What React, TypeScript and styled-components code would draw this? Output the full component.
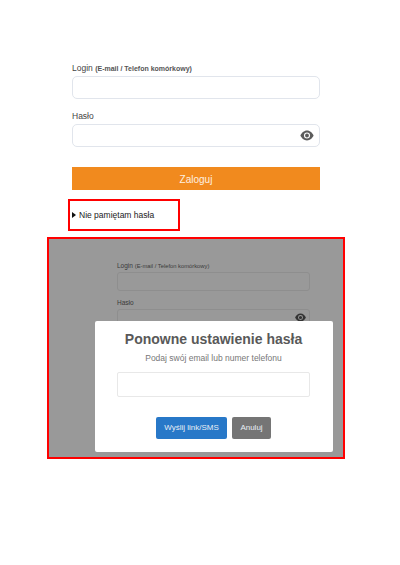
import styled, { createGlobalStyle } from "styled-components";

const GlobalStyle = createGlobalStyle`
  html, body {
    margin: 0;
    padding: 0;
    background: #fff;
    font-family: "Liberation Sans", Arial, sans-serif;
  }
`;

const Page = styled.div`
  width: 400px;
  height: 565px;
  overflow: hidden;
  padding-top: 62px;
  box-sizing: border-box;
`;

const LoginForm = styled.form`
  width: 248px;
  margin-left: 72px;
`;

const Label = styled.label`
  display: block;
  font-size: 8.5px;
  line-height: 12px;
  height: 14px;
  color: #444;
`;

const Hint = styled.span`
  font-size: 7px;
  font-weight: bold;
  color: #555;
`;

const InputWrap = styled.div`
  position: relative;
  margin-bottom: 11px;
`;

const Input = styled.div`
  height: 23px;
  box-sizing: border-box;
  border: 1px solid #e1e5ec;
  border-radius: 5px;
  background: #fff;
`;

const EyeIcon = styled.svg`
  position: absolute;
  right: 6px;
  top: 6px;
  width: 14px;
  height: 11px;
  fill: #5c5c5c;
`;

const SubmitButton = styled.div`
  height: 23px;
  margin-top: 20px;
  background: #f18a1e;
  color: #fdf0e0;
  font-size: 10px;
  line-height: 25px;
  text-align: center;
`;

const ForgotBox = styled.div`
  width: 112px;
  height: 32px;
  margin: 9px 0 6px 68px;
  box-sizing: border-box;
  border: 2px solid #f00;
  display: flex;
  align-items: center;
  padding-left: 2px;
  font-size: 8.5px;
  color: #222;
`;

const Arrow = styled.span`
  width: 0;
  height: 0;
  margin-right: 3px;
  border-left: 4px solid #111;
  border-top: 3px solid transparent;
  border-bottom: 3px solid transparent;
`;

const PreviewFrame = styled.div`
  position: relative;
  width: 298px;
  height: 222px;
  margin-left: 47px;
  box-sizing: border-box;
  border: 2px solid #f00;
  background: #999;
  overflow: hidden;
  padding: 22px 0 0 68px;
`;

const DimLabel = styled.div`
  font-size: 6.5px;
  line-height: 9px;
  height: 10px;
  color: #3a3a3a;
`;

const DimHint = styled.span`
  font-size: 5.8px;
  color: #3a3a3a;
`;

const DimInput = styled.div`
  position: relative;
  width: 193px;
  height: 19px;
  margin-top: 1px;
  box-sizing: border-box;
  border: 1px solid #8e8e8e;
  border-radius: 3px;
  margin-bottom: 7px;
`;

const DimEye = styled.svg`
  position: absolute;
  right: 3px;
  top: 3px;
  width: 11px;
  height: 9px;
  fill: #333;
`;

const Modal = styled.div`
  position: absolute;
  left: 46px;
  top: 82px;
  width: 238px;
  height: 131px;
  border-radius: 2px;
  background: #fff;
  display: flex;
  flex-direction: column;
  align-items: center;
  padding: 9px 1px 0 0;
  box-sizing: border-box;
`;

const ModalTitle = styled.div`
  font-size: 14px;
  font-weight: bold;
  line-height: 18px;
  color: #595959;
`;

const ModalText = styled.div`
  margin-top: 5px;
  font-size: 8.5px;
  line-height: 10px;
  color: #777;
`;

const ModalInput = styled.div`
  width: 193px;
  height: 25px;
  margin-top: 9px;
  box-sizing: border-box;
  border: 1px solid #e8e8e8;
  border-radius: 2px;
`;

const ModalActions = styled.div`
  display: flex;
  gap: 5px;
  margin-top: 20px;
`;

const ModalButton = styled.div<{ $bg: string; $width: number }>`
  width: ${(p) => p.$width}px;
  height: 22px;
  border-radius: 2px;
  background: ${(p) => p.$bg};
  color: #e8eef5;
  font-size: 8px;
  line-height: 22px;
  text-align: center;
`;

// solid eye with a small ring inside the pupil
const eyePath =
  "M12 3C6.5 3 2 7.5 0 12c2 4.5 6.5 9 12 9s10-4.500 12-9c-2-4.500-6.500-9-12-9zm0 14.500a5.500 5.500 0 1 1 0-11 5.500 5.500 0 0 1 0 11zm0-9a3.500 3.500 0 1 0 0 7 3.500 3.500 0 0 0 0-7z";

const App = () => {
  return (
    <Page>
      <GlobalStyle />
      <LoginForm>
        <Label>
          Login <Hint>(E-mail / Telefon komórkowy)</Hint>
        </Label>
        <InputWrap>
          <Input />
        </InputWrap>
        <Label>Hasło</Label>
        <InputWrap>
          <Input />
          <EyeIcon viewBox="0 2 24 20">
            <path d={eyePath} />
          </EyeIcon>
        </InputWrap>
        <SubmitButton>Zaloguj</SubmitButton>
      </LoginForm>
      <ForgotBox>
        <Arrow />
        Nie pamiętam hasła
      </ForgotBox>
      <PreviewFrame>
        <DimLabel>
          Login <DimHint>(E-mail / Telefon komórkowy)</DimHint>
        </DimLabel>
        <DimInput />
        <DimLabel>Hasło</DimLabel>
        <DimInput>
          <DimEye viewBox="0 2 24 20">
            <path d={eyePath} />
          </DimEye>
        </DimInput>
        <Modal>
          <ModalTitle>Ponowne ustawienie hasła</ModalTitle>
          <ModalText>Podaj swój email lub numer telefonu</ModalText>
          <ModalInput />
          <ModalActions>
            <ModalButton $bg="#2878c8" $width={71}>
              Wyślij link/SMS
            </ModalButton>
            <ModalButton $bg="#757575" $width={39}>
              Anuluj
            </ModalButton>
          </ModalActions>
        </Modal>
      </PreviewFrame>
    </Page>
  );
};

export default App;
